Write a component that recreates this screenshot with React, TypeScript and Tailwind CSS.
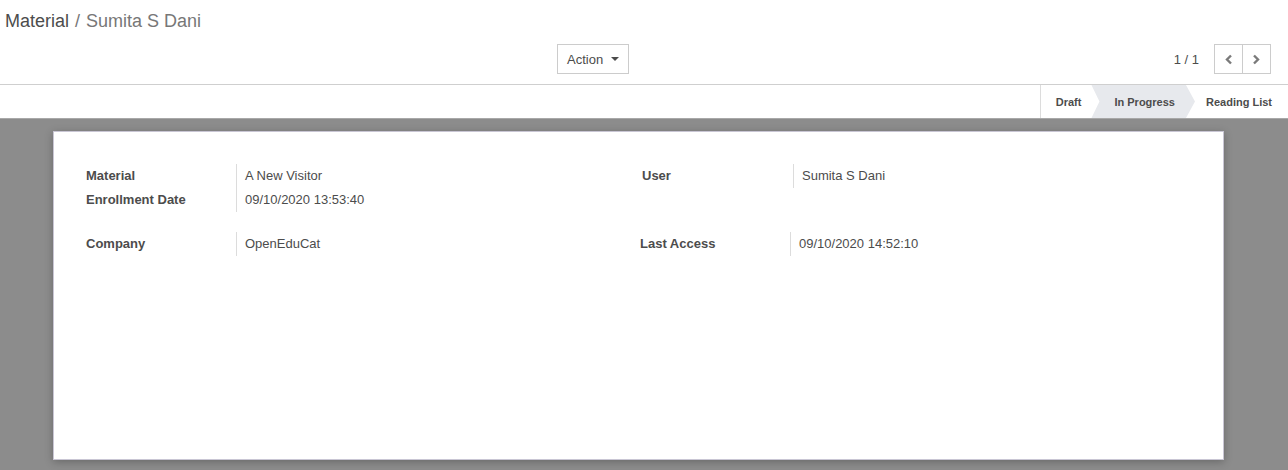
import React from "react";

const font = "font-['Liberation_Sans','Roboto',sans-serif]";

function FieldBlock({ rows, labelW = "w-[150px]" }: { rows: [string, string][]; labelW?: string }) {
  return (
    <div className="flex flex-col">
      {rows.map(([l, v]) => (
        <div key={l} className="flex h-6 items-center">
          <div className={`${labelW} shrink-0 text-[13px] font-bold text-[#4c4c4c]`}>{l}</div>
          <div className="self-stretch border-l border-[#dcdcdc] pl-2 flex items-center text-[13px] text-[#4c4c4c]">{v}</div>
        </div>
      ))}
    </div>
  );
}

export default function App() {
  return (
    <div className={`${font} h-[470px] w-[1288px] overflow-hidden bg-[#8c8c8c]`}>
      {/* control panel */}
      <div className="bg-white border-b border-[#cfcfcf]">
        <div className="pl-[5px] pt-[10px] text-[18px] leading-[22px]">
          <span className="text-[#4c4c4c]">Material</span>
          <span className="text-[#777] px-[6px]">/</span>
          <span className="text-[#777]">Sumita S Dani</span>
        </div>
        <div className="flex items-center h-[30px] mt-[12px] mb-[10px]">
          <button
            type="button"
            className="ml-[557px] h-[30px] w-[72px] border border-[#ccc] bg-white text-[13px] text-[#4c4c4c] flex items-center pl-[9px] gap-[8px] pt-[1px]"
          >
            Action
            <span className="inline-block border-x-[4px] border-t-[4px] border-x-transparent border-t-[#4c4c4c] mb-[2px]" />
          </button>
          <div className="ml-auto flex items-center pr-[17px]">
            <span className="text-[13px] text-[#4c4c4c] mr-[15px] pt-[1px]">1 / 1</span>
            <div className="flex border border-[#ccc] h-[30px]">
              <button type="button" className="w-[28px] flex items-center justify-center border-r border-[#ccc]">
                <svg width="9" height="11" viewBox="0 0 9 11"><path d="M7 1.5 L3 5.5 L7 9.5" fill="none" stroke="#7a7a7a" strokeWidth="2.4" /></svg>
              </button>
              <button type="button" className="w-[27px] flex items-center justify-center">
                <svg width="9" height="11" viewBox="0 0 9 11"><path d="M2 1.5 L6 5.5 L2 9.5" fill="none" stroke="#7a7a7a" strokeWidth="2.4" /></svg>
              </button>
            </div>
          </div>
        </div>
      </div>

      {/* status bar */}
      <div className="flex justify-end h-[34px] bg-white border-b border-[#a8a8a8]">
        <div className="flex h-full text-[11px] font-bold text-[#4c4c4c]">
          <div className="flex items-center border-l border-[#dcdcdc] pl-[15px] pr-[10px] pt-[2px]">Draft</div>
          <div className="flex items-center bg-[#e7e9ed] pl-[23px] pr-[20px] pt-[2px] [clip-path:polygon(0_0,calc(100%-9px)_0,100%_50%,calc(100%-9px)_100%,0_100%,8px_50%)]">
            In Progress
          </div>
          <div className="flex items-center pl-[11px] pr-[16px] pt-[2px]">Reading List</div>
        </div>
      </div>

      {/* sheet */}
      <div className="ml-[53px] mt-[12px] w-[1171px] h-[329px] bg-white border border-[#c9c6d4] shadow-[0_2px_8px_rgba(0,0,0,0.25)] px-[32px] pt-[32px]">
        <div className="flex">
          <div className="w-[554px]">
            <FieldBlock rows={[["Material", "A New Visitor"], ["Enrollment Date", "09/10/2020 13:53:40"]]} />
          </div>
          <div className="pl-[2px]">
            <FieldBlock rows={[["User", "Sumita S Dani"]]} labelW="w-[151px]" />
          </div>
        </div>
        <div className="flex mt-[20px]">
          <div className="w-[554px]">
            <FieldBlock rows={[["Company", "OpenEduCat"]]} />
          </div>
          <div>
            <FieldBlock rows={[["Last Access", "09/10/2020 14:52:10"]]} labelW="w-[150px]" />
          </div>
        </div>
      </div>
    </div>
  );
}
